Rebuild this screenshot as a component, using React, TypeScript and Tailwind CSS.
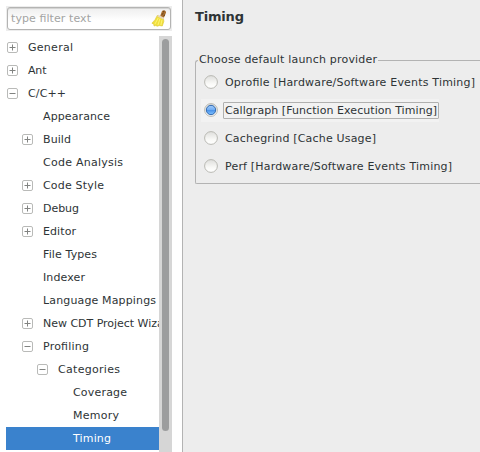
import React from "react";

type Item = { label: string; level: number; state?: "open" | "closed"; selected?: boolean; textWidth: number };

const items: Item[] = [
  { label: "General", level: 0, state: "closed", textWidth: 45 },
  { label: "Ant", level: 0, state: "closed", textWidth: 18.5 },
  { label: "C/C++", level: 0, state: "open", textWidth: 38 },
  { label: "Appearance", level: 1, textWidth: 67 },
  { label: "Build", level: 1, state: "closed", textWidth: 28 },
  { label: "Code Analysis", level: 1, textWidth: 80 },
  { label: "Code Style", level: 1, state: "closed", textWidth: 61 },
  { label: "Debug", level: 1, state: "closed", textWidth: 36 },
  { label: "Editor", level: 1, state: "closed", textWidth: 33 },
  { label: "File Types", level: 1, textWidth: 54 },
  { label: "Indexer", level: 1, textWidth: 42 },
  { label: "Language Mappings", level: 1, textWidth: 113 },
  { label: "New CDT Project Wizard", level: 1, state: "closed", textWidth: 132 },
  { label: "Profiling", level: 1, state: "open", textWidth: 46 },
  { label: "Categories", level: 2, state: "open", textWidth: 62 },
  { label: "Coverage", level: 3, textWidth: 54 },
  { label: "Memory", level: 3, textWidth: 46 },
  { label: "Timing", level: 3, selected: true, textWidth: 38 },
];

const providers = [
  { label: "Oprofile [Hardware/Software Events Timing]", width: 250 },
  { label: "Callgraph [Function Execution Timing]", width: 212, checked: true },
  { label: "Cachegrind [Cache Usage]", width: 151 },
  { label: "Perf [Hardware/Software Events Timing]", width: 227 },
];

function Label({ text, width, baseline = 11 }: { text: string; width: number; baseline?: number }) {
  return (
    <svg width={width + 1} height="16" className="block shrink-0 overflow-visible">
      <text x="0" y={baseline} textLength={width} fill="currentColor">{text}</text>
    </svg>
  );
}

function Expander({ open }: { open: boolean }) {
  return (
    <svg width="11" height="11" viewBox="0 0 11 11" className="block" fill="none">
      <rect x=".5" y=".5" width="10" height="10" rx="1.5" fill="#fff" stroke="#b9bab8" />
      <path d={open ? "M2.5 5.5h6" : "M2.5 5.5h6M5.5 2.5v6"} stroke="#818381" />
    </svg>
  );
}

function Broom() {
  return (
    <svg width="16" height="17" viewBox="0 0 16 17" className="block shrink-0">
      <path d="M9 6.5 10.9 1.2Q12.3-.3 14.2.7q1.3 1.2.6 2.6L12.8 8z" fill="#a96e2c" />
      <path d="m10.8 4.4 1.6-1M12 2l1.4-.8M12.6 5.8l1.4-1" stroke="#5e3d1d" strokeWidth="1" />
      <path d="M6.3 5.4 12.6 8.7 12.8 11.5 11.3 16 8.2 15.5 6.5 16.2 4.5 15.6 3 16 2.8 14.2.9 13.2Q4.5 10 6.3 5.4z" fill="#f0df3d" stroke="#dcc433" strokeWidth=".6" />
      <path d="m7.2 8-3.3 6.2M9 8.7l-2.1 6.4M11 9.8l-1.1 5.2" stroke="#fff67c" strokeWidth=".9" />
      <path d="m6.8 5.7 6 3" stroke="#e6d5b8" strokeWidth="2" />
    </svg>
  );
}

function Radio({ checked }: { checked?: boolean }) {
  return (
    <svg width="15" height="15" viewBox="0 0 15 15" className="block shrink-0">
      <defs>
        <linearGradient id="well" x2="0" y2="1">
          <stop stopColor="#dededb" /><stop offset=".65" stopColor="#fafaf8" /><stop offset="1" stopColor="#fff" />
        </linearGradient>
        <linearGradient id="dot" x2="0" y2="1">
          <stop stopColor="#a5cdfb" /><stop offset=".45" stopColor="#73aff5" /><stop offset=".55" stopColor="#4b94ea" /><stop offset="1" stopColor="#83c3ff" />
        </linearGradient>
      </defs>
      <circle cx="7" cy="7" r="6.4" fill="url(#well)" stroke="#b9b9b3" />
      {checked && <circle cx="7" cy="7" r="4.7" fill="url(#dot)" stroke="#3068ad" />}
    </svg>
  );
}

export default function App() {
  return (
    <div className="flex h-[452px] w-[480px] overflow-hidden bg-white font-['DejaVu_Sans',sans-serif] text-[11px] leading-4 text-[#2e3436]">
      <aside className="flex w-[182px] shrink-0 flex-col pl-1.5 pt-1.5">
        <div className="h-[25px] w-[166px] bg-[#ededed] p-px">
          <div className="flex h-[23px] items-center justify-between rounded-[3px] border border-[#b4b4b3] bg-linear-to-b from-[#eeeeee] to-white to-60% pl-[3px] pr-[3px] text-[#a3a4a3] shadow-[inset_0_1px_0_#d4d4d3]">
            <Label text="type filter text" width={80} />
            <Broom />
          </div>
        </div>
        <div className="mt-[5px] flex h-[416px] w-[166px]">
          <div className="w-[153px] overflow-hidden">
            {items.map((item) => (
              <div
                key={item.label}
                className={`flex h-[23px] items-center ${item.selected ? "bg-[#3a82cd] text-white" : ""}`}
              >
                <div className="shrink-0" style={{ width: item.level * 15 + 1 }} />
                <div className="w-[21px] shrink-0">{item.state && <Expander open={item.state === "open"} />}</div>
                <Label text={item.label} width={item.textWidth} />
              </div>
            ))}
          </div>
          <div className="w-[13px] bg-[#d6d6d6] px-[3px] pt-[3px]">
            <div className="h-[392px] rounded-full bg-[#9c9d9e]" />
          </div>
        </div>
      </aside>
      <main className="flex-1 overflow-hidden border-l border-[#b3b3b3] bg-[#ededed] pl-3 pt-2">
        <h1 className="h-[43px] text-[13px] font-bold">
          <Label text="Timing" width={49} baseline={13} />
        </h1>
        <section className="w-[300px]">
          <div className="flex h-[9px] items-start">
            <div className="mt-[9px] h-[5px] w-[3px] shrink-0 rounded-tl-[3px] border-l border-t border-[#b3b3b3]" />
            <div className="w-[180px] shrink-0 pl-px"><Label text="Choose default launch provider" width={178} baseline={12} /></div>
            <div className="mt-[9px] h-px flex-1 bg-[#b3b3b3]" />
          </div>
          <div className="mt-[3px] h-[121px] rounded-bl-[2px] border-b border-l border-[#b3b3b3] pl-[5px] pt-[8px]">
            {providers.map((p) => (
              <div key={p.label} className="flex h-7 items-start">
                <div className={`flex h-[23px] items-center pl-[3px] ${p.checked ? "bg-[#f2f2f2]" : ""}`}>
                  <Radio checked={p.checked} />
                  <div className={`ml-[4px] flex h-[17px] items-center rounded-[1px] border pl-px ${p.checked ? "border-[#b0b0af]" : "border-transparent"}`}>
                    <Label text={p.label} width={p.width} />
                  </div>
                </div>
              </div>
            ))}
          </div>
        </section>
      </main>
    </div>
  );
}
